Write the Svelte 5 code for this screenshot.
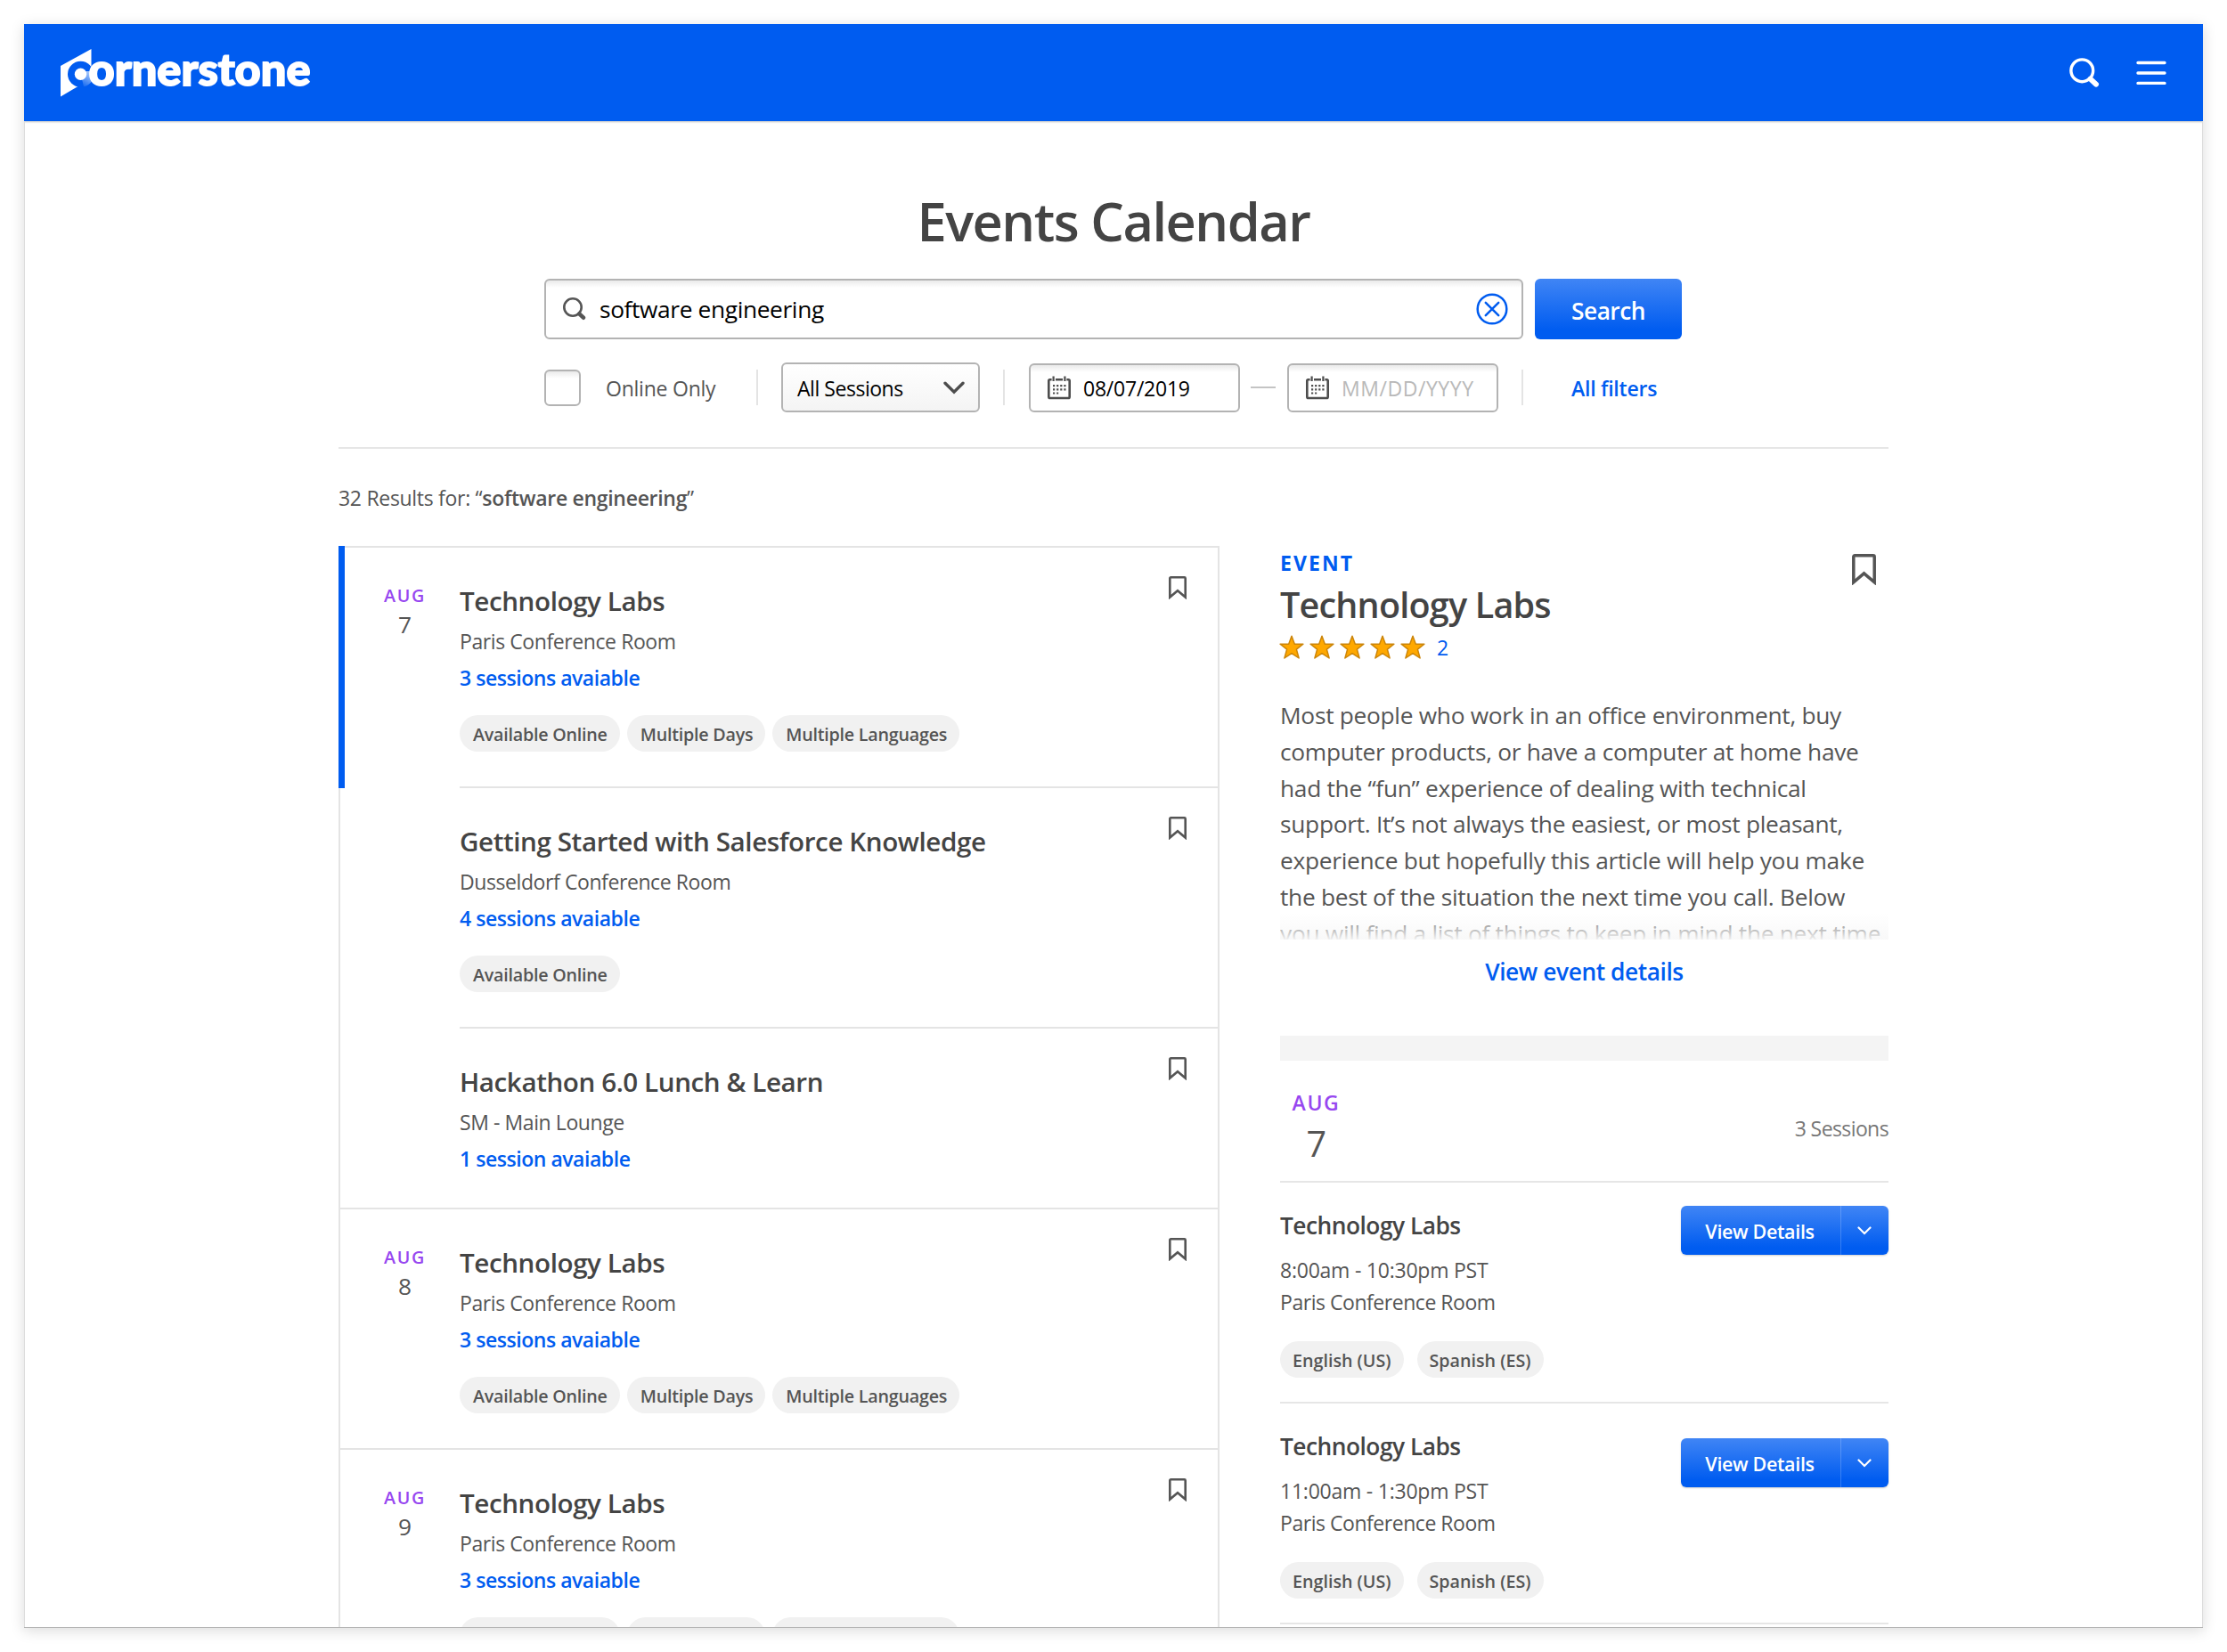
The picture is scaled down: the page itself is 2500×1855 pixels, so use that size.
<script lang="ts">
	type Item = { title: string; place: string; sessions: string; tags: string[] };

	const labTags = ['Available Online', 'Multiple Days', 'Multiple Languages'];

	const days: { month: string; day: number; items: Item[] }[] = [
		{
			month: 'AUG',
			day: 7,
			items: [
				{ title: 'Technology Labs', place: 'Paris Conference Room', sessions: '3 sessions avaiable', tags: labTags },
				{
					title: 'Getting Started with Salesforce Knowledge',
					place: 'Dusseldorf Conference Room',
					sessions: '4 sessions avaiable',
					tags: ['Available Online']
				},
				{ title: 'Hackathon 6.0 Lunch & Learn', place: 'SM - Main Lounge', sessions: '1 session avaiable', tags: [] }
			]
		},
		{
			month: 'AUG',
			day: 8,
			items: [
				{ title: 'Technology Labs', place: 'Paris Conference Room', sessions: '3 sessions avaiable', tags: labTags }
			]
		},
		{
			month: 'AUG',
			day: 9,
			items: [
				{ title: 'Technology Labs', place: 'Paris Conference Room', sessions: '3 sessions avaiable', tags: labTags }
			]
		}
	];

	const sessions = [
		{ time: '8:00am - 10:30pm PST', place: 'Paris Conference Room' },
		{ time: '11:00am - 1:30pm PST', place: 'Paris Conference Room' }
	];

	let query = $state('software engineering');
	let selected = $state('0-0');
</script>

{#snippet bookmark(w: number, h: number)}
	<svg width={w} height={h} viewBox="0 0 20 26" fill="none">
		<path d="M1.3 23.6V2.4Q1.3 1.3 2.4 1.3H17.6Q18.7 1.3 18.7 2.4V23.6L10 16.2Z" stroke="#555" stroke-width="2.6" />
	</svg>
{/snippet}

{#snippet calendar()}
	<svg width="26" height="27" viewBox="0 0 26 27" fill="none" stroke="#4d4d4d">
		<path
			d="M4.6 4.2H2.6Q1.3 4.2 1.3 5.6V23.4Q1.3 25 2.8 25H23.2Q24.7 25 24.7 23.4V5.6Q24.7 4.2 23.4 4.2H21.4M9 4.2H17"
			stroke-width="2.6"
		/>
		<path d="M6.6 0.5V6M19.4 0.5V6" stroke-width="2.2" />
		<path d="M6 11.2H20.5M6 15.3H20.5" stroke-width="2.2" stroke-dasharray="2.2 1.9" />
		<path d="M6 19.5H12.2" stroke-width="2.2" stroke-dasharray="2.2 1.9" />
	</svg>
{/snippet}

<div class="page">
	<div class="frame">
		<header>
			<svg class="logo" width="284" height="56" viewBox="66 54 284 56">
				<defs>
					<linearGradient id="wedge" x1="104" y1="80" x2="94" y2="97" gradientUnits="userSpaceOnUse">
						<stop offset="0" stop-color="#fff" stop-opacity="0.75" />
						<stop offset="1" stop-color="#fff" stop-opacity="0.1" />
					</linearGradient>
				</defs>
				<path d="M68 74L102.5 55V80L87.5 97L68 108.5Z" fill="#fff" />
				<circle cx="90.5" cy="83.3" r="14.5" fill="#005cf0" />
				<text class="wordmark" x="99.5" y="96.3" textLength="249" lengthAdjust="spacingAndGlyphs">ornerstone</text>
				<path d="M90.5 80H106.2A16 16 0 0 1 94 97.3L92 89Z" fill="url(#wedge)" />
				<circle cx="90.5" cy="83.3" r="6.7" fill="#fff" />
			</svg>
			<div class="tools">
				<button aria-label="Search">
					<svg width="34" height="34" viewBox="0 0 34 34" fill="none" stroke="#fff">
						<circle cx="14.3" cy="14.3" r="12.4" stroke-width="3.4" />
						<path d="M23.6 23.6L30 29.6" stroke-width="6" stroke-linecap="round" />
					</svg>
				</button>
				<button aria-label="Menu">
					<svg width="34" height="28" viewBox="0 0 34 28" stroke="#fff" stroke-width="3.4" stroke-linecap="round">
						<path d="M2 2.5H32M2 14H32M2 25.4H32" />
					</svg>
				</button>
			</div>
		</header>

		<main>
			<h1>Events Calendar</h1>

			<div class="search">
				<label class="box query">
					<svg width="26" height="26" viewBox="0 0 26 26" fill="none" stroke="#555">
						<circle cx="11" cy="11" r="9.7" stroke-width="2.6" />
						<path d="M18.3 18.3L22.9 22.7" stroke-width="4.6" stroke-linecap="round" />
					</svg>
					<input bind:value={query} aria-label="Search events" />
					<button class="clear" aria-label="Clear" onclick={() => (query = '')}>
						<svg width="36" height="36" viewBox="0 0 36 36" fill="none" stroke="#005cf0" stroke-width="2.5" stroke-linecap="round">
							<circle cx="18" cy="18" r="16.3" />
							<path d="M10.8 10.8L25.2 25.2M25.2 10.8L10.8 25.2" />
						</svg>
					</button>
				</label>
				<button class="primary">Search</button>
			</div>

			<div class="filters">
				<span class="box check"></span>
				<span class="online">Online Only</span>
				<span class="sep"></span>
				<button class="select">
					<span>All Sessions</span>
					<svg width="24" height="15" viewBox="0 0 24 15" fill="none" stroke="#4d4d4d" stroke-width="3.4" stroke-linecap="round">
						<path d="M2 2.2L12 12.2L22 2.2" />
					</svg>
				</button>
				<span class="sep"></span>
				<div class="box date">{@render calendar()}<span>08/07/2019</span></div>
				<span class="dash"></span>
				<div class="box date empty">{@render calendar()}<span>MM/DD/YYYY</span></div>
				<span class="sep"></span>
				<a class="all" href="#filters">All filters</a>
			</div>

			<p class="results">32 Results for: “<b>software engineering</b>”</p>

			<div class="columns">
				<div class="list">
					{#each days as group, g}
						<section class="day">
							<div class="when">
								<div class="month">{group.month}</div>
								<div class="num">{group.day}</div>
							</div>
							<div class="items">
								{#each group.items as item, i}
									<article>
										<div class="info">
											<h3>{item.title}</h3>
											<p class="place">{item.place}</p>
											<a href="#sessions" onclick={() => (selected = `${g}-${i}`)}>{item.sessions}</a>
											{#if item.tags.length}
												<div class="tags">
													{#each item.tags as tag}<span>{tag}</span>{/each}
												</div>
											{/if}
										</div>
										{@render bookmark(20, 26)}
									</article>
								{/each}
							</div>
							{#if selected === `${g}-0`}<i class="marker"></i>{/if}
						</section>
					{/each}
				</div>

				<aside>
					<div class="top">
						<div>
							<div class="kind">EVENT</div>
							<h2>Technology Labs</h2>
						</div>
						{@render bookmark(27, 35)}
					</div>
					<div class="rating">
						{#each Array(5) as _}
							<svg width="28" height="28" viewBox="0 0 28 28">
								<path
									d="M14 1.2L17.3 10.2H26.9L19.4 16.1L22.1 26L14 20.6L5.9 26L8.6 16.1L1.1 10.2H10.7Z"
									fill="#ffa800"
									stroke="#cb850a"
									stroke-width="1.5"
									stroke-linejoin="round"
								/>
							</svg>
						{/each}
						<span>2</span>
					</div>
					<p class="about">
						Most people who work in an office environment, buy<br />
						computer products, or have a computer at home have<br />
						had the “fun” experience of dealing with technical<br />
						support. It’s not always the easiest, or most pleasant,<br />
						experience but hopefully this article will help you make<br />
						the best of the situation the next time you call. Below<br />
						you will find a list of things to keep in mind the next time
					</p>
					<a class="more" href="#details">View event details</a>
					<div class="band"></div>
					<div class="summary">
						<div class="bigdate">
							<div class="month">AUG</div>
							<div class="num">7</div>
						</div>
						<span>3 Sessions</span>
					</div>
					{#each sessions as s}
						<div class="session">
							<div>
								<h4>Technology Labs</h4>
								<p>{s.time}</p>
								<p class="room">{s.place}</p>
								<div class="tags">
									<span>English (US)</span>
									<span>Spanish (ES)</span>
								</div>
							</div>
							<div class="split">
								<button>View Details</button>
								<button aria-label="More">
									<svg width="16" height="10" viewBox="0 0 16 10" fill="none" stroke="#fff" stroke-width="2.2" stroke-linecap="round">
										<path d="M1.5 1.5L8 8L14.5 1.5" />
									</svg>
								</button>
							</div>
						</div>
					{/each}
				</aside>
			</div>
		</main>
	</div>
</div>

<style>
	:global(body) {
		background: #fff;
	}

	.page {
		box-sizing: border-box;
		width: 2500px;
		height: 1855px;
		padding: 27px;
		font-family: 'Open Sans', 'Noto Sans', sans-serif;
		font-size: 23px;
		letter-spacing: -0.01em;
		color: #555;
	}

	.page * {
		box-sizing: border-box;
	}

	.frame {
		display: flex;
		flex-direction: column;
		height: 1801px;
		overflow: hidden;
		background: #fff;
		border-bottom: 1px solid #b4b4b4;
		box-shadow: 0 3px 14px 1px rgba(0, 0, 0, 0.13);
	}

	button {
		font: inherit;
		letter-spacing: inherit;
		border: 0;
		padding: 0;
		background: none;
		cursor: pointer;
	}

	svg {
		display: block;
		flex: none;
	}

	h1,
	h2,
	h3,
	h4,
	p {
		margin: 0;
		font-weight: 400;
	}

	a {
		color: #005cf0;
		text-decoration: none;
		font-weight: 600;
	}

	header {
		flex: none;
		height: 109px;
		padding: 0 41px 0 39px;
		display: flex;
		align-items: center;
		justify-content: space-between;
		background: #005cf0;
		box-shadow: 0 1px 2px rgba(0, 0, 0, 0.25);
	}

	.logo {
		overflow: visible;
	}

	.wordmark {
		font-family: Lato, sans-serif;
		font-weight: 900;
		font-size: 50px;
		letter-spacing: 0;
		fill: #fff;
		stroke: #fff;
		stroke-width: 1.8px;
	}

	.tools {
		display: flex;
		align-items: center;
		gap: 41px;
	}

	main {
		flex: 1;
		min-height: 0;
		padding: 76px 352px 0;
		border: solid #ddd;
		border-width: 0 1px;
	}

	h1 {
		font-size: 59.5px;
		line-height: 72px;
		font-weight: 600;
		letter-spacing: -0.025em;
		color: #444;
		text-align: center;
	}

	.search {
		width: 1277px;
		height: 68px;
		margin: 29px 231px 26px;
		display: flex;
		gap: 13px;
	}

	.box {
		border: 2px solid #b3b3b3;
		border-radius: 6px;
		background: linear-gradient(#eaeaea, #fff 8px);
		display: flex;
		align-items: center;
	}

	.query {
		flex: 1;
		padding: 0 15px 0 19px;
	}

	.query input {
		flex: 1;
		border: 0;
		outline: 0;
		margin-left: 15px;
		padding: 0;
		background: none;
		font: inherit;
		font-size: 26.3px;
		letter-spacing: -0.014em;
		color: #000;
	}

	.primary {
		width: 165px;
		border-radius: 6px;
		background: linear-gradient(#4085f5, #005cf0 85%);
		color: #fff;
		font-size: 26.3px;
		font-weight: 600;
		letter-spacing: -0.02em;
		padding-top: 3px;
	}

	.filters {
		width: 1277px;
		height: 56px;
		margin: 0 231px;
		display: flex;
		align-items: center;
		white-space: nowrap;
	}

	.check {
		width: 41px;
		height: 41px;
	}

	.online {
		width: 169px;
		margin-left: 28px;
		padding-top: 2px;
	}

	.sep {
		width: 2px;
		height: 40px;
		background: #e4e4e4;
	}

	.select {
		width: 223px;
		height: 56px;
		margin: 0 26px;
		padding: 0 15px 0 16px;
		display: flex;
		align-items: center;
		justify-content: space-between;
		border: 2px solid #b3b3b3;
		border-radius: 6px;
		background: linear-gradient(#fff, #f4f4f4);
		color: #000;
		letter-spacing: -0.02em;
	}

	.select span,
	.date span {
		padding-top: 2px;
	}

	.date {
		width: 237px;
		height: 55px;
		padding-left: 19px;
		gap: 14px;
		color: #000;
	}

	.sep + .date {
		margin-left: 27px;
	}

	.empty {
		color: #b9b9b9;
		margin-right: 26px;
		letter-spacing: 0.024em;
	}

	.dash {
		width: 28px;
		height: 2px;
		margin: 0 13px 0 12px;
		background: #c4c4c4;
	}

	.all {
		margin-left: 54px;
		padding-top: 2px;
	}

	.results {
		margin-top: 39px;
		border-top: 2px solid #e6e6e6;
		padding: 39px 0 38px;
		line-height: 32px;
		letter-spacing: -0.013em;
	}

	.results b {
		font-weight: 600;
	}

	.columns {
		display: flex;
		gap: 68px;
		align-items: flex-start;
	}

	.list {
		width: 989px;
	}

	.day {
		position: relative;
		display: flex;
		border: solid #e4e4e4;
		border-width: 2px 2px 0;
	}

	.marker {
		position: absolute;
		left: -2px;
		top: -2px;
		width: 7px;
		height: 272px;
		background: #005cf0;
	}

	.when {
		width: 134px;
		padding: 40px 0 0 11px;
		text-align: center;
	}

	.month {
		font-size: 19.7px;
		line-height: 28px;
		font-weight: 600;
		letter-spacing: 0.09em;
		color: #9747f0;
	}

	.num {
		font-size: 26.3px;
		line-height: 36px;
	}

	.items {
		flex: 1;
	}

	article {
		display: flex;
		justify-content: space-between;
		padding: 32px 35px 39px 0;
	}

	article + article {
		border-top: 2px solid #e4e4e4;
	}

	.info {
		padding-top: 7px;
	}

	h3 {
		font-size: 29.6px;
		line-height: 42px;
		font-weight: 600;
		letter-spacing: -0.014em;
		color: #444;
	}

	.place {
		margin: 8px 0 9px;
		line-height: 32px;
		letter-spacing: -0.018em;
	}

	.info a {
		display: block;
		line-height: 32px;
		letter-spacing: -0.02em;
	}

	.tags {
		display: flex;
		gap: 8px;
		margin-top: 26px;
	}

	.tags span {
		height: 41px;
		padding: 0 14px 0 15px;
		border-radius: 21px;
		background: #f1f1f1;
		font-size: 19.7px;
		line-height: 44px;
		font-weight: 600;
	}

	aside {
		width: 683px;
		padding-top: 4px;
	}

	.top {
		display: flex;
		justify-content: space-between;
		padding-right: 14px;
	}

	.top > :global(svg) {
		margin-top: 5px;
	}

	.kind {
		line-height: 30px;
		font-weight: 700;
		letter-spacing: 0.09em;
		color: #005cf0;
	}

	h2 {
		margin-top: 5px;
		font-size: 39.5px;
		line-height: 54px;
		font-weight: 600;
		letter-spacing: -0.02em;
		color: #444;
	}

	.rating {
		display: flex;
		align-items: center;
		gap: 6px;
		height: 28px;
		margin: 7px 0 0 -1px;
		color: #005cf0;
	}

	.rating span {
		margin-left: 7px;
	}

	.about {
		position: relative;
		margin-top: 42px;
		height: 272px;
		overflow: hidden;
		font-size: 26.3px;
		line-height: 40.8px;
		letter-spacing: -0.011em;
		white-space: nowrap;
	}

	/* fades the cut-off last line */
	.about::after {
		content: '';
		position: absolute;
		inset: auto 0 0;
		height: 30px;
		background: linear-gradient(rgba(255, 255, 255, 0.1), rgba(248, 248, 248, 0.95));
	}

	.more {
		display: block;
		margin-top: 18px;
		text-align: center;
		font-size: 26.3px;
		line-height: 36px;
		letter-spacing: -0.016em;
	}

	.band {
		height: 28px;
		margin-top: 54px;
		background: #f4f4f4;
	}

	.summary {
		display: flex;
		justify-content: space-between;
		align-items: center;
		padding: 31px 0 15px;
		border-bottom: 2px solid #e6e6e6;
		color: #777;
		letter-spacing: -0.026em;
	}

	.bigdate {
		width: 81px;
		text-align: center;
		color: #555;
	}

	.bigdate .month {
		font-size: 23px;
		line-height: 32px;
		letter-spacing: 0.07em;
	}

	.bigdate .num {
		margin-top: 3px;
		font-size: 39.5px;
		line-height: 54px;
	}

	.session {
		display: flex;
		justify-content: space-between;
		padding: 30px 0 27px;
		border-bottom: 2px solid #e6e6e6;
	}

	h4 {
		font-size: 26.3px;
		line-height: 36px;
		margin-bottom: 14px;
		font-weight: 600;
		letter-spacing: -0.019em;
		color: #444;
	}

	.session p {
		line-height: 36px;
	}

	.session .room {
		letter-spacing: -0.02em;
	}

	.session .tags {
		gap: 15px;
	}

	.session .tags span {
		padding-left: 14px;
		letter-spacing: 0;
	}

	.split {
		display: flex;
		width: 233px;
		height: 55px;
		margin-top: -4px;
		border-radius: 6px;
		background: linear-gradient(#4085f5, #005cf0 85%);
		box-shadow: 0 1px 2px rgba(0, 0, 0, 0.2);
	}

	.session + .session .split {
		margin-top: 9px;
	}

	.split button {
		flex: 1;
		padding: 1px 2px 0 0;
		color: #fff;
		font-size: 21.5px;
		font-weight: 600;
		letter-spacing: -0.016em;
		white-space: nowrap;
	}

	.split button + button {
		flex: none;
		width: 54px;
		padding: 0 2px 0 0;
		display: grid;
		place-items: center;
		border-left: 1px solid rgba(255, 255, 255, 0.2);
	}
</style>
